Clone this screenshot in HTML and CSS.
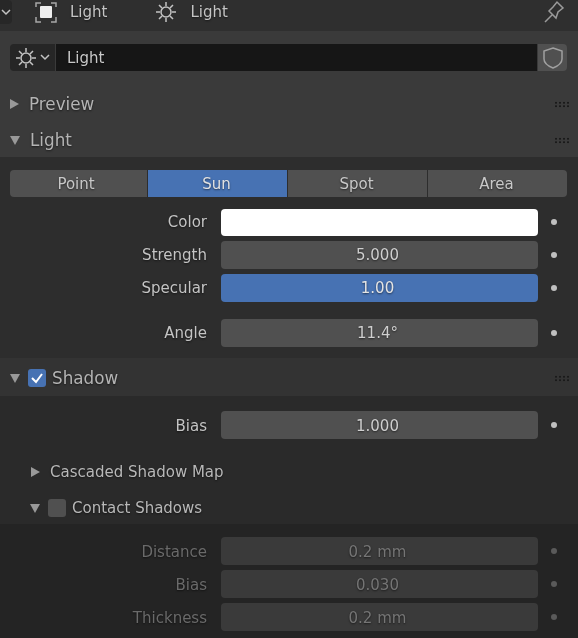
FILE: index.html
```html
<html>
<head>
<meta charset="UTF-8">
<link rel="stylesheet" href="styles.css">
</head>
<body>
<div class="topbar">
  <div class="crumb-btn"><svg class="chev" width="10" height="7" viewBox="0 0 10 7"><path d="M1 1l4 4 4-4"/></svg></div>
  <svg class="obj-icon" width="22" height="22" viewBox="0 0 22 22"><path class="brk" d="M1 6V2h5M16 2h5v4M1 16v5h5M16 21h5v-5"/><rect x="5" y="5" width="12" height="12" rx="1" fill="#eee" stroke="none"/></svg>
  <span class="crumb">Light</span>
  <svg class="sun sun-top" width="22" height="22" viewBox="0 0 22 22"><use href="#sun"/></svg>
  <span class="crumb">Light</span>
  <svg class="pin" width="24" height="24" viewBox="0 0 24 24"><path d="M2 22l7-7M6 11l7 7 2-6 5-4-6-6-4 5z"/></svg>
</div>

<div class="name-area">
  <div class="name-row">
    <div class="browse">
      <svg class="sun" width="22" height="22" viewBox="0 0 22 22">
        <g id="sun"><circle cx="11" cy="11" r="5"/><path d="M11 1v4M11 17v4M1 11h4M17 11h4M4 4l3 3M15 15l3 3M4 18l3-3M15 7l3-3"/></g>
      </svg>
      <svg class="chev" width="10" height="7" viewBox="0 0 10 7"><path d="M1 1l4 4 4-4"/></svg>
    </div>
    <div class="name-field">Light</div>
    <div class="shield-btn"><svg width="22" height="24" viewBox="0 0 22 24"><path d="M11 2l9 3v8c0 4-4 7-9 9-5-2-9-5-9-9V5z"/></svg></div>
  </div>
</div>

<div class="panel-head head-light">
  <span class="tri-right"></span><span class="panel-title">Preview</span><span class="grip"></span>
</div>
<div class="panel-head head-light head-last">
  <span class="tri-down"></span><span class="panel-title">Light</span><span class="grip"></span>
</div>

<div class="body-light">
  <div class="tabs">
    <div class="tab first">Point</div>
    <div class="tab active">Sun</div>
    <div class="tab">Spot</div>
    <div class="tab">Area</div>
  </div>
  <div class="prop"><span class="lbl">Color</span><div class="field white"></div><span class="dot"></span></div>
  <div class="prop"><span class="lbl">Strength</span><div class="field">5.000</div><span class="dot"></span></div>
  <div class="prop"><span class="lbl">Specular</span><div class="field blue">1.00</div><span class="dot"></span></div>
  <div class="prop prop-gap"><span class="lbl">Angle</span><div class="field">11.4°</div><span class="dot"></span></div>
</div>

<div class="panel-head head-shadow">
  <span class="tri-down"></span>
  <span class="check on"><svg width="14" height="12" viewBox="0 0 14 12"><path d="M2 6l4 4 6-8"/></svg></span>
  <span class="panel-title tight">Shadow</span><span class="grip"></span>
</div>

<div class="body-shadow">
  <div class="prop low"><span class="lbl">Bias</span><div class="field">1.000</div><span class="dot"></span></div>
  <div class="sub sub-first"><span class="tri-right small"></span><span class="sub-title">Cascaded Shadow Map</span></div>
  <div class="sub"><span class="tri-down small"></span><span class="check"></span><span class="sub-title">Contact Shadows</span></div>
</div>

<div class="body-contact">
  <div class="prop low off"><span class="lbl">Distance</span><div class="field">0.2 mm</div><span class="dot"></span></div>
  <div class="prop low off"><span class="lbl">Bias</span><div class="field">0.030</div><span class="dot"></span></div>
  <div class="prop low off"><span class="lbl">Thickness</span><div class="field">0.2 mm</div><span class="dot"></span></div>
</div>
</body>
</html>
```

FILE: styles.css
```css
*{
margin:0;
padding:0;
box-sizing:border-box;
}
html,body{
width:578px;
height:638px;
overflow:hidden;
}
html{
background:#242424;
}
body{
background:#242424;
color:#c8c8c8;
font-family:"DejaVu Sans",sans-serif;
font-size:15px;
text-shadow:0 1px 2px rgba(0,0,0,.55);
filter:blur(.45px);
}
svg{
display:block;
flex:none;
fill:none;
stroke:#c4c4c4;
stroke-width:1.5;
}

/* top bar */
.topbar{
height:31px;
background:#2f2f2f;
display:flex;
align-items:flex-start;
}
.crumb-btn{
width:12px;
height:24px;
background:#272727;
border-radius:0 4px 4px 0;
display:flex;
align-items:center;
justify-content:flex-end;
padding-right:1px;
}
.obj-icon{
margin:1px 13px 0 23px;
}
.brk{
stroke:#a8a8a8;
}
.sun-top{
margin:1px 13px 0 48px;
}
.crumb{
line-height:25px;
color:#c4c4c4;
}
.pin{
margin:0 0 0 auto;
position:relative;
left:-11px;
stroke:#9a9a9a;
}

/* datablock name */
.name-area{
background:#3a3a3a;
height:55px;
padding:13px 11px 0 10px;
}
.name-row{
display:flex;
height:27px;
}
.browse{
width:45px;
background:#262626;
border-radius:4px 0 0 4px;
display:flex;
align-items:center;
padding-left:5px;
gap:3px;
margin-right:1px;
}
.name-field{
flex:1;
background:#161616;
padding-left:11px;
line-height:29px;
color:#c8c8c8;
}
.shield-btn{
width:29px;
margin-left:1px;
background:#505050;
border-radius:0 4px 4px 0;
display:flex;
align-items:center;
justify-content:center;
}
.shield-btn svg{
stroke:#a0a0a0;
}

/* panel headers */
.panel-head{
display:flex;
align-items:center;
padding-left:10px;
height:36px;
}
.head-light{
background:#3a3a3a;
}
.head-last{
height:35px;
padding-top:1px;
}
.head-shadow{
background:#333;
height:38px;
padding-top:2px;
}
.panel-title{
margin-left:10px;
color:#b4b4b4;
font-size:16.8px;
}
.panel-title.tight{
margin-left:6px;
}
.tri-right{
width:0;
height:0;
border-left:9px solid #999;
border-top:5px solid transparent;
border-bottom:5px solid transparent;
}
.tri-down{
width:0;
height:0;
border-top:9px solid #999;
border-left:5px solid transparent;
border-right:5px solid transparent;
}
.tri-right.small{
margin-left:1px;
}
.grip{
margin-left:auto;
margin-right:8px;
width:16px;
height:7px;
background-image:radial-gradient(circle,#1a1a1a .8px,transparent 1px);
background-size:4px 3.5px;
}

/* light panel */
.body-light{
background:#2d2d2d;
height:201px;
padding-top:13px;
}
.tabs{
display:grid;
grid-template-columns:137px 1fr 1fr 1fr;
gap:1px;
margin:0 11px 11px 10px;
height:27px;
border-radius:4px;
overflow:hidden;
}
.tab{
background:#505050;
text-align:center;
line-height:28px;
color:#c8c8c8;
padding-right:2px;
}
.tab.first{
padding-right:5px;
}
.tab.active{
background:#4772b3;
color:#e2e2e2;
}
.prop{
display:flex;
align-items:center;
height:28px;
margin-bottom:5px;
}
.prop-gap{
margin-top:17px;
}
.lbl{
width:207px;
text-align:right;
color:#c4c4c4;
}
.low .lbl{
padding-top:2px;
}
.field{
width:317px;
height:28px;
margin-left:14px;
padding-right:4px;
background:#505050;
border-radius:4px;
text-align:center;
line-height:28px;
color:#cfcfcf;
}
.low .field{
line-height:30px;
}
.field.white{
background:#fff;
height:27px;
}
.field.blue{
background:#4772b3;
color:#e4e4e4;
}
.dot{
width:6px;
height:6px;
margin-left:13px;
border-radius:50%;
background:#c0c0c0;
}

/* shadow panel */
.body-shadow{
background:#2a2a2a;
height:128px;
padding-top:15px;
}
.sub{
display:flex;
align-items:center;
height:36px;
padding-left:30px;
}
.sub-first{
margin-top:15px;
}
.sub-title{
margin-left:10px;
color:#b8b8b8;
}
.check{
width:18px;
height:18px;
margin-left:8px;
background:#505050;
border-radius:3px;
display:flex;
align-items:center;
justify-content:center;
}
.check.on{
background:#4772b3;
}
.check svg{
stroke:#fff;
stroke-width:2;
}
.sub .check + .sub-title{
margin-left:6px;
}

/* contact shadows, greyed out */
.body-contact{
background:#242424;
height:114px;
padding-top:13px;
}
.off .lbl{
color:#6a6a6a;
}
.off .field{
background:#3a3a3a;
color:#757575;
}
.off .dot{
background:#5a5a5a;
}
```
